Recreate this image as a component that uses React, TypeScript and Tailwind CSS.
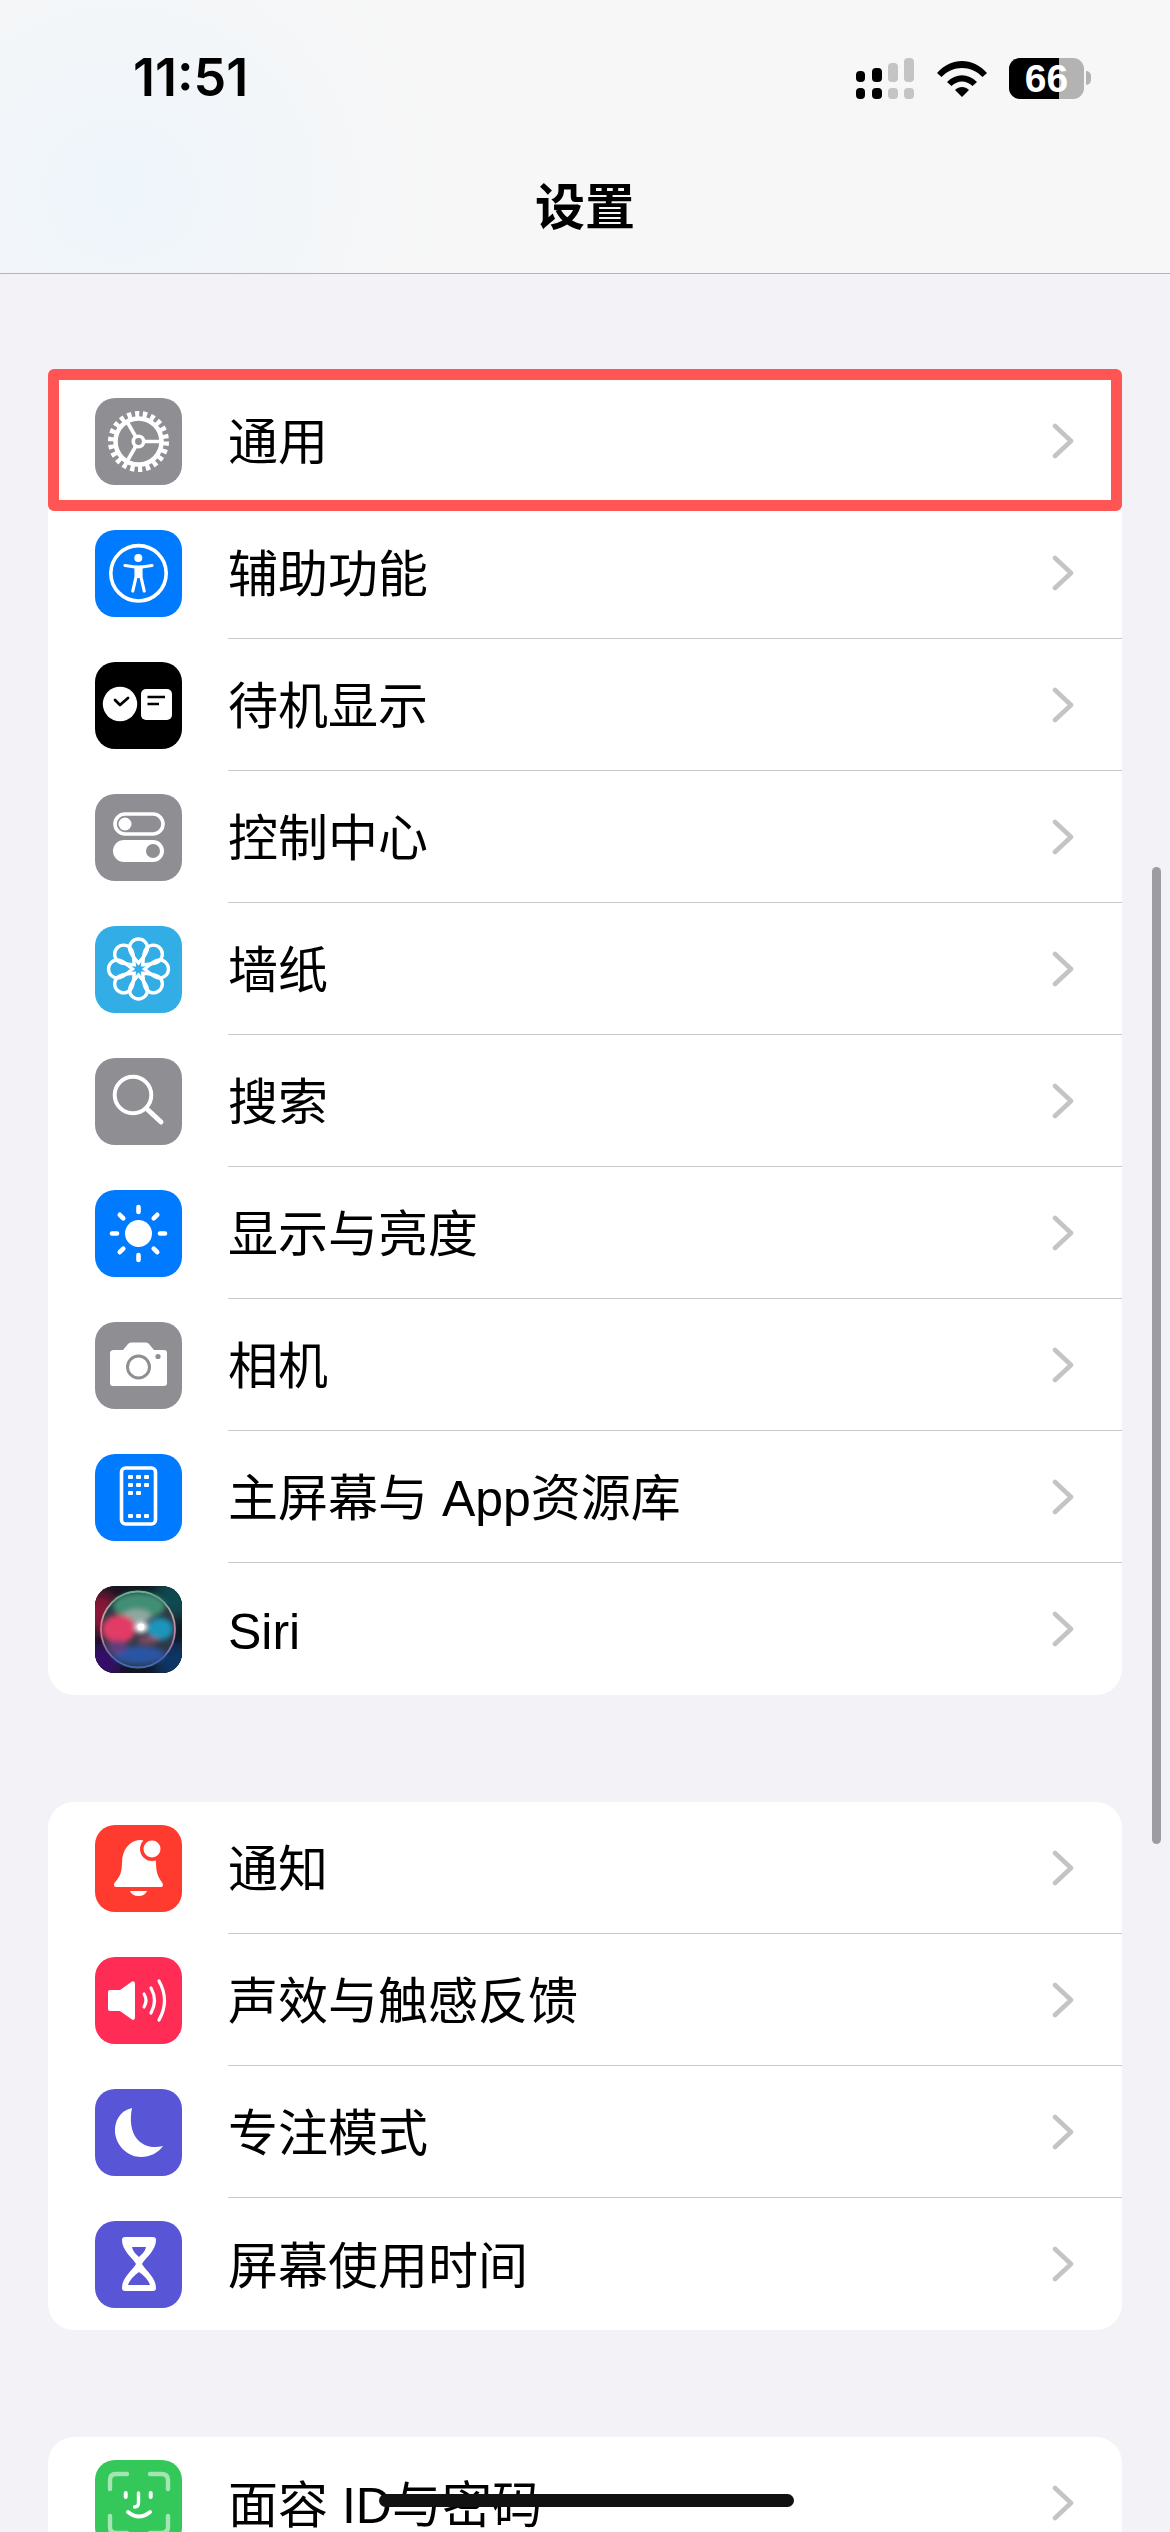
import React from 'react';

function Gear() {
  const spokes = [0, 120, 240];
  return (
    <svg viewBox="0 0 87 87" className="w-full h-full">
      <circle cx="43.5" cy="43.5" r="27" fill="none" stroke="#fff" strokeWidth="7" strokeDasharray="4.2 3.51" />
      <circle cx="43.5" cy="43.5" r="23" fill="none" stroke="#fff" strokeWidth="4.6" />
      {spokes.map((a) => (
        <line key={a} x1="43.5" y1="43.5" x2="66" y2="43.5" stroke="#fff" strokeWidth="3.6" transform={`rotate(${a} 43.5 43.5)`} />
      ))}
      <circle cx="43.5" cy="43.5" r="7" fill="#fff" />
      <circle cx="43.5" cy="43.5" r="3.4" fill="#8e8e93" />
    </svg>
  );
}

function Accessibility() {
  return (
    <svg viewBox="0 0 87 87" className="w-full h-full">
      <circle cx="43.5" cy="43.3" r="27.7" fill="none" stroke="#fff" strokeWidth="3.6" />
      <circle cx="43.3" cy="28" r="4" fill="#fff" />
      <path d="M30 35.5 L40 37 H47 L57 35.5" fill="none" stroke="#fff" strokeWidth="3.2" strokeLinecap="round" strokeLinejoin="round" />
      <path d="M41 37 V47 L37.8 61 M46 37 V47 L49.2 61" fill="none" stroke="#fff" strokeWidth="3.2" strokeLinecap="round" />
      <rect x="40" y="37" width="7" height="11" fill="#fff" />
    </svg>
  );
}

function StandBy() {
  return (
    <svg viewBox="0 0 87 87" className="w-full h-full">
      <circle cx="25" cy="42" r="17.2" fill="#fff" />
      <path d="M20 38 L25 43 L33 36" fill="none" stroke="#000" strokeWidth="2.8" strokeLinecap="round" strokeLinejoin="round" />
      <rect x="46" y="27" width="31" height="31" rx="5" fill="#fff" />
      <path d="M52.5 35 H70 M52.5 42 H64" fill="none" stroke="#000" strokeWidth="2.4" />
    </svg>
  );
}

function Toggles() {
  return (
    <svg viewBox="0 0 87 87" className="w-full h-full">
      <rect x="20" y="20" width="48" height="20" rx="10" fill="none" stroke="#fff" strokeWidth="3.6" />
      <circle cx="30" cy="30" r="6.5" fill="#fff" />
      <rect x="18" y="46" width="51" height="22" rx="11" fill="#fff" />
      <circle cx="58" cy="57" r="7" fill="#8e8e93" />
    </svg>
  );
}

function Flower() {
  const petals = [0, 45, 90, 135, 180, 225, 270, 315];
  return (
    <svg viewBox="0 0 87 87" className="w-full h-full">
      <g transform="translate(43.5 43)">
        {petals.map((a) => (
          <path
            key={a}
            d="M0 -6 C-3 -10 -9 -15 -9 -21 A9 9 0 0 1 9 -21 C9 -15 3 -10 0 -6 Z"
            fill="none"
            stroke="#fff"
            strokeWidth="3.4"
            transform={`rotate(${a})`}
          />
        ))}
        <circle r="3.6" fill="#32ade6" />
      </g>
    </svg>
  );
}

function Search() {
  return (
    <svg viewBox="0 0 87 87" className="w-full h-full">
      <circle cx="38" cy="37" r="18.3" fill="none" stroke="#fff" strokeWidth="4" />
      <line x1="52" y1="51" x2="66" y2="64" stroke="#fff" strokeWidth="5" strokeLinecap="round" />
    </svg>
  );
}

function Sun() {
  const rays = [0, 45, 90, 135, 180, 225, 270, 315];
  return (
    <svg viewBox="0 0 87 87" className="w-full h-full">
      <circle cx="43.5" cy="43.5" r="13.5" fill="#fff" />
      {rays.map((a) => (
        <line key={a} x1="43.5" y1="17" x2="43.5" y2="22" stroke="#fff" strokeWidth="4.6" strokeLinecap="round" transform={`rotate(${a} 43.5 43.5)`} />
      ))}
    </svg>
  );
}

function Camera() {
  return (
    <svg viewBox="0 0 87 87" className="w-full h-full">
      <path d="M19 28 H28 L33 22 Q34 20.5 36 20.5 H51 Q53 20.5 54 22 L59 28 H69 Q72 28 72 31 V61 Q72 64 69 64 H18 Q15 64 15 61 V31 Q15 28 19 28 Z" fill="#fff" />
      <circle cx="43.5" cy="45" r="11" fill="none" stroke="#8e8e93" strokeWidth="3" />
      <circle cx="63" cy="34.5" r="2.6" fill="#8e8e93" />
    </svg>
  );
}

function HomeScreen() {
  const cells = [
    [33, 21], [41, 21], [49, 21],
    [33, 29], [41, 29], [49, 29],
    [33, 37], [41, 37],
    [33, 60], [41, 60], [49, 60],
  ];
  return (
    <svg viewBox="0 0 87 87" className="w-full h-full">
      <rect x="26.5" y="14" width="34" height="56" rx="4" fill="none" stroke="#fff" strokeWidth="3.6" />
      {cells.map(([x, y]) => (
        <rect key={`${x}-${y}`} x={x} y={y} width="5" height="4" rx="1" fill="#fff" />
      ))}
    </svg>
  );
}

function Siri() {
  return (
    <svg viewBox="0 0 87 87" className="w-full h-full">
      <defs>
        <linearGradient id="siriRim" x1="0" y1="0" x2="0" y2="1">
          <stop offset="0" stopColor="#6fc79a" />
          <stop offset="0.5" stopColor="#e8829c" />
          <stop offset="1" stopColor="#3f6cc0" />
        </linearGradient>
        <filter id="siriBlur" x="-30%" y="-30%" width="160%" height="160%">
          <feGaussianBlur stdDeviation="2.6" />
        </filter>
        <filter id="siriSoft" x="-40%" y="-40%" width="180%" height="180%">
          <feGaussianBlur stdDeviation="7" />
        </filter>
      </defs>
      <rect width="87" height="87" fill="#12161f" />
      <g filter="url(#siriSoft)">
        <circle cx="4" cy="26" r="20" fill="#8a1239" />
        <circle cx="6" cy="78" r="20" fill="#35106a" />
        <circle cx="80" cy="12" r="22" fill="#0b4a50" />
        <circle cx="82" cy="78" r="22" fill="#0a3566" />
      </g>
      <ellipse cx="43" cy="43.5" rx="37" ry="38" fill="#2c3a46" stroke="url(#siriRim)" strokeWidth="1.8" />
      <g filter="url(#siriBlur)">
        <ellipse cx="44" cy="20" rx="26" ry="13" fill="#3f8f74" />
        <ellipse cx="42" cy="30" rx="14" ry="7" fill="#8ea8a0" />
        <ellipse cx="24" cy="43" rx="17" ry="14" fill="#e23a66" />
        <ellipse cx="65" cy="43" rx="13" ry="11" fill="#1c94bc" />
        <ellipse cx="44" cy="69" rx="26" ry="9" fill="#2a55a4" />
        <ellipse cx="22" cy="61" rx="10" ry="7" fill="#6a3d86" opacity="0.8" />
        <ellipse cx="53" cy="54" rx="11" ry="4" fill="#a84c68" opacity="0.7" />
      </g>
      <ellipse cx="46" cy="41" rx="7" ry="6" fill="#fff" filter="url(#siriBlur)" />
      <circle cx="46" cy="41" r="3.4" fill="#fff" />
    </svg>
  );
}

function Bell() {
  return (
    <svg viewBox="0 0 87 87" className="w-full h-full">
      <path d="M19 60 C19 56 27 54 27 38 C27 24 35 16 44 15 C52 15 61 22 61 38 C61 54 68 56 68 60 Q68 62 65 62 H22 Q19 62 19 60 Z" fill="#fff" />
      <path d="M35 66 H52 Q50 71 43.5 71 Q37 71 35 66 Z" fill="#fff" />
      <circle cx="57" cy="24" r="12" fill="#ff3b30" />
      <circle cx="57" cy="24" r="8.5" fill="#fff" />
    </svg>
  );
}

function Speaker() {
  return (
    <svg viewBox="0 0 87 87" className="w-full h-full">
      <path d="M15 33 H25 L37 24.5 Q40 23.5 40 27 V60 Q40 64 37 62.5 L25 54 H15 Q13 54 13 52 V35 Q13 33 15 33 Z" fill="#fff" />
      <g fill="none" stroke="#fff" strokeWidth="3.2" strokeLinecap="round">
        <path d="M49 37 Q53 43.5 49 50" />
        <path d="M56 31 Q63 43.5 56 56" />
        <path d="M64 24 Q75 43.5 64 63" />
      </g>
    </svg>
  );
}

function Moon() {
  return (
    <svg viewBox="0 0 87 87" className="w-full h-full">
      <path d="M37 19 C24 22 19.5 33 20 43 C21 57 33 68 46 68 C55 68 63 64 68 57 C50 62 31 50 37 19 Z" fill="#fff" />
    </svg>
  );
}

function Hourglass() {
  return (
    <svg viewBox="0 0 87 87" className="w-full h-full">
      <path d="M30 16 H58 Q61 16 61 19 C61 30 50 37 47 43 C50 49 61 56 61 67 Q61 70 58 70 H30 Q27 70 27 67 C27 56 38 49 41 43 C38 37 27 30 27 19 Q27 16 30 16 Z" fill="#fff" />
      <path d="M37 26 H51 C50 31 46 34 44 36 C42 34 38 31 37 26 Z" fill="#5856d6" />
      <path d="M33 64 C35 58 41 53 44 51 C47 53 53 58 55 64 Z" fill="#5856d6" />
    </svg>
  );
}

function FaceId() {
  return (
    <svg viewBox="0 0 87 87" className="w-full h-full">
      <g fill="none" stroke="#fff" strokeOpacity="0.55" strokeWidth="4.4" strokeLinecap="round">
        <path d="M15 29 V20 Q15 14 21 14 H32" />
        <path d="M55 14 H66 Q73 14 73 20 V29" />
        <path d="M15 56 V67 Q15 73 21 73 H32" />
        <path d="M55 73 H66 Q73 73 73 67 V56" />
      </g>
      <g fill="none" stroke="#fff" strokeWidth="4" strokeLinecap="round">
        <path d="M30.7 33 V37 M55.7 33 V37" />
        <path d="M43.5 33 V43 Q43.5 47 39.5 47" strokeWidth="3.4" />
        <path d="M33 52 Q44 61 55 52" />
      </g>
    </svg>
  );
}

function Chevron() {
  return (
    <svg viewBox="0 0 22 36" className="w-[22px] h-[36px]">
      <path d="M3 3 L19 18 L3 33" fill="none" stroke="#c4c4c7" strokeWidth="4.6" strokeLinecap="round" strokeLinejoin="round" />
    </svg>
  );
}

type Item = { label: string; bg: string; Icon: () => React.ReactElement; marked?: boolean };

const groups: Item[][] = [
  [
    { label: '通用', bg: 'bg-[#8e8e93]', Icon: Gear, marked: true },
    { label: '辅助功能', bg: 'bg-[#007aff]', Icon: Accessibility },
    { label: '待机显示', bg: 'bg-black', Icon: StandBy },
    { label: '控制中心', bg: 'bg-[#8e8e93]', Icon: Toggles },
    { label: '墙纸', bg: 'bg-[#32ade6]', Icon: Flower },
    { label: '搜索', bg: 'bg-[#8e8e93]', Icon: Search },
    { label: '显示与亮度', bg: 'bg-[#007aff]', Icon: Sun },
    { label: '相机', bg: 'bg-[#8e8e93]', Icon: Camera },
    { label: '主屏幕与 App资源库', bg: 'bg-[#007aff]', Icon: HomeScreen },
    { label: 'Siri', bg: 'bg-black', Icon: Siri },
  ],
  [
    { label: '通知', bg: 'bg-[#ff3b30]', Icon: Bell },
    { label: '声效与触感反馈', bg: 'bg-[#ff2d55]', Icon: Speaker },
    { label: '专注模式', bg: 'bg-[#5856d6]', Icon: Moon },
    { label: '屏幕使用时间', bg: 'bg-[#5856d6]', Icon: Hourglass },
  ],
  [{ label: '面容 ID与密码', bg: 'bg-[#34c759]', Icon: FaceId }],
];

function Row({ item, last }: { item: Item; last: boolean }) {
  const { Icon } = item;
  return (
    <div className="relative flex h-[132px] items-center pl-[47px]">
      <div className={`w-[87px] h-[87px] shrink-0 rounded-[20px] overflow-hidden ${item.bg}`}>
        <Icon />
      </div>
      <div className={`ml-[46px] flex h-full flex-1 items-center justify-between pr-[48px] ${last ? '' : 'border-b border-[#c8c8cb]'}`}>
        <span className="mt-[5px] text-[50px] leading-none text-black">{item.label}</span>
        <Chevron />
      </div>
      {item.marked && (
        <div className="absolute -top-[6px] -bottom-[4px] left-0 right-0 rounded-[6px] border-[11px] border-[#ff5555]" />
      )}
    </div>
  );
}

function StatusIcons() {
  return (
    <div className="flex items-center">
      <svg viewBox="0 0 58 41" className="w-[58px] h-[41px]">
        <g fill="#000">
          <rect x="0" y="13" width="9" height="11" rx="4" />
          <rect x="0" y="30" width="9" height="11" rx="4" />
          <rect x="16" y="10" width="10" height="14" rx="4" />
          <rect x="16" y="30" width="10" height="11" rx="4" />
        </g>
        <g fill="#c4c4c4">
          <rect x="32" y="5" width="10" height="19" rx="4" />
          <rect x="32" y="30" width="10" height="11" rx="4" />
          <rect x="48" y="0" width="10" height="24" rx="4" />
          <rect x="48" y="30" width="10" height="11" rx="4" />
        </g>
      </svg>
      <svg viewBox="0 0 50 37" className="ml-[23px] w-[50px] h-[37px]">
        <path d="M0 13 C14 -3 36 -3 50 13 L45.5 17 C34 5 16 5 4.5 17 Z" fill="#000" />
        <path d="M10 22 C19 13 31 13 40 22 L35.5 26 C29 20 21 20 14.5 26 Z" fill="#000" />
        <path d="M18 30 C22 26 28 26 32 30 L25 37 Z" fill="#000" />
      </svg>
      <div className="relative ml-[22px] flex h-[41px] w-[75px] items-center justify-center overflow-hidden rounded-[11px] bg-[#b3b3b3]">
        <div className="absolute inset-y-0 left-0 w-[50px] bg-black" />
        <span className="relative font-['Liberation_Sans',sans-serif] text-[39px] leading-none font-bold text-white">66</span>
      </div>
      <div className="ml-[2px] h-[14px] w-[5px] rounded-r-full bg-[#b3b3b3]" />
    </div>
  );
}

export default function App() {
  return (
    <div className="relative h-[2532px] w-[1170px] overflow-hidden bg-[#f2f2f7] font-['Liberation_Sans','Noto_Sans_CJK_SC',sans-serif]">
      <header className="h-[274px] border-b border-[#b4b4b8] bg-[radial-gradient(ellipse_320px_300px_at_120px_190px,#eef5fb,#f7f7f7)] px-[133px] pt-[50px]">
        <div className="-mr-[54px] flex items-center justify-between">
          <span className="font-['Inter',sans-serif] text-[52px] leading-[56px] font-semibold text-black">11:51</span>
          <StatusIcons />
        </div>
        <h1 className="mt-[72px] text-center text-[50px] leading-[60px] font-bold text-black">设置</h1>
      </header>

      <main className="flex flex-col gap-[107px] px-[48px] pt-[101px]">
        {groups.map((group, i) => (
          <section key={i} className="rounded-[26px] bg-white">
            {group.map((item, j) => (
              <Row key={item.label} item={item} last={j === group.length - 1} />
            ))}
          </section>
        ))}
      </main>

      {/* scroll indicator and home bar float over the list */}
      <div className="absolute left-[1152px] top-[867px] h-[977px] w-[9px] rounded-full bg-[#9c9ca2]" />
      <div className="absolute left-[379px] top-[2494px] h-[13px] w-[415px] rounded-full bg-[#111]" />
    </div>
  );
}
